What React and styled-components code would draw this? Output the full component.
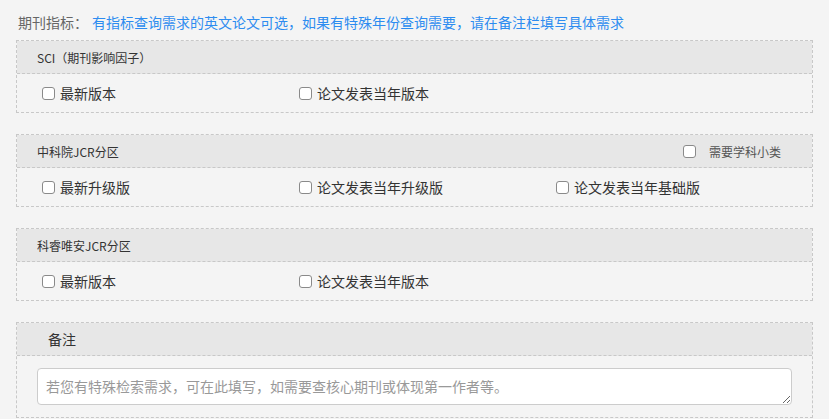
import React from "react";
import styled, { css, createGlobalStyle } from "styled-components";

const Global = createGlobalStyle`
  html, body { margin: 0; padding: 0; background: #f4f4f4; }
  body { font-family: "Noto Sans CJK SC", "Noto Sans", sans-serif; color: #333; }
`;

const Page = styled.div`
  width: 829px;
  height: 419px;
  overflow: hidden;
  padding: 0 16px 0 16px;
  box-sizing: border-box;
`;

const Intro = styled.div`
  display: flex;
  align-items: center;
  height: 40px;
  padding-left: 2px;
  font-size: 14px;
  line-height: 20px;
  padding-top: 3px;
  box-sizing: border-box;
`;

const IntroLabel = styled.span`
  color: #666;
  width: 74px;
`;

const IntroNote = styled.span`
  color: #2d8cf0;
`;

const Panel = styled.section`
  border: 1px dashed #c8c8c8;
  width: 797px;
  box-sizing: border-box;
  margin-bottom: ${(p) => p.$gap}px;
`;

const PanelHead = styled.div`
  display: flex;
  align-items: center;
  justify-content: space-between;
  height: 32px;
  background: #e7e7e7;
  border-bottom: 1px dashed #c8c8c8;
  padding: 0 31px 0 ${(p) => (p.$large ? 31 : 20)}px;
  font-size: ${(p) => (p.$large ? 14 : 12)}px;
  color: #333;
`;

const PanelBody = styled.div`
  display: flex;
  align-items: center;
  height: ${(p) => p.$h}px;
  padding-left: ${(p) => p.$pl}px;
`;

const Option = styled.label`
  display: flex;
  align-items: center;
  width: 257px;
  font-size: 14px;
  color: #333;
  cursor: pointer;
`;

const boxLook = css`
  appearance: none;
  -webkit-appearance: none;
  width: 13px;
  height: 13px;
  box-sizing: border-box;
  border: 1px solid #8a8a8a;
  border-radius: 3px;
  background: #fff;
  flex-shrink: 0;
`;

const Box = styled.input.attrs({ type: "checkbox" })`
  ${boxLook}
  margin: 0 5px 0 4px;
`;

const SubOption = styled.label`
  display: flex;
  align-items: center;
  font-size: 12px;
  color: #555;
`;

const SubBox = styled.input.attrs({ type: "checkbox" })`
  ${boxLook}
  margin: 0 13px 0 0;
`;

const Note = styled.textarea`
  width: 755px;
  height: 37px;
  box-sizing: border-box;
  border: 1px solid #ccc;
  border-radius: 4px;
  background: #fff;
  padding: 7px 8px;
  font-family: "Noto Sans CJK SC", "Noto Sans", sans-serif;
  font-size: 14px;
  line-height: 20px;
  color: #333;
  resize: vertical;
  display: block;
  &::placeholder { color: #999; }
`;

const groups = [
  { title: "SCI（期刊影响因子）", options: ["最新版本", "论文发表当年版本"] },
  {
    title: "中科院JCR分区",
    options: ["最新升级版", "论文发表当年升级版", "论文发表当年基础版"],
    extra: "需要学科小类",
  },
  { title: "科睿唯安JCR分区", options: ["最新版本", "论文发表当年版本"] },
];

export default function App() {
  return (
    <Page>
      <Global />
      <Intro>
        <IntroLabel>期刊指标：</IntroLabel>
        <IntroNote>有指标查询需求的英文论文可选，如果有特殊年份查询需要，请在备注栏填写具体需求</IntroNote>
      </Intro>
      {groups.map((g) => (
        <Panel key={g.title} $gap={21}>
          <PanelHead>
            <span>{g.title}</span>
            {g.extra && (
              <SubOption>
                <SubBox />
                {g.extra}
              </SubOption>
            )}
          </PanelHead>
          <PanelBody $h={38} $pl={21}>
            {g.options.map((o) => (
              <Option key={o}>
                <Box />
                {o}
              </Option>
            ))}
          </PanelBody>
        </Panel>
      ))}
      <Panel $gap={0}>
        <PanelHead $large>
          <span>备注</span>
        </PanelHead>
        <PanelBody $h={61} $pl={20}>
          <Note placeholder="若您有特殊检索需求，可在此填写，如需要查核心期刊或体现第一作者等。" />
        </PanelBody>
      </Panel>
    </Page>
  );
}
